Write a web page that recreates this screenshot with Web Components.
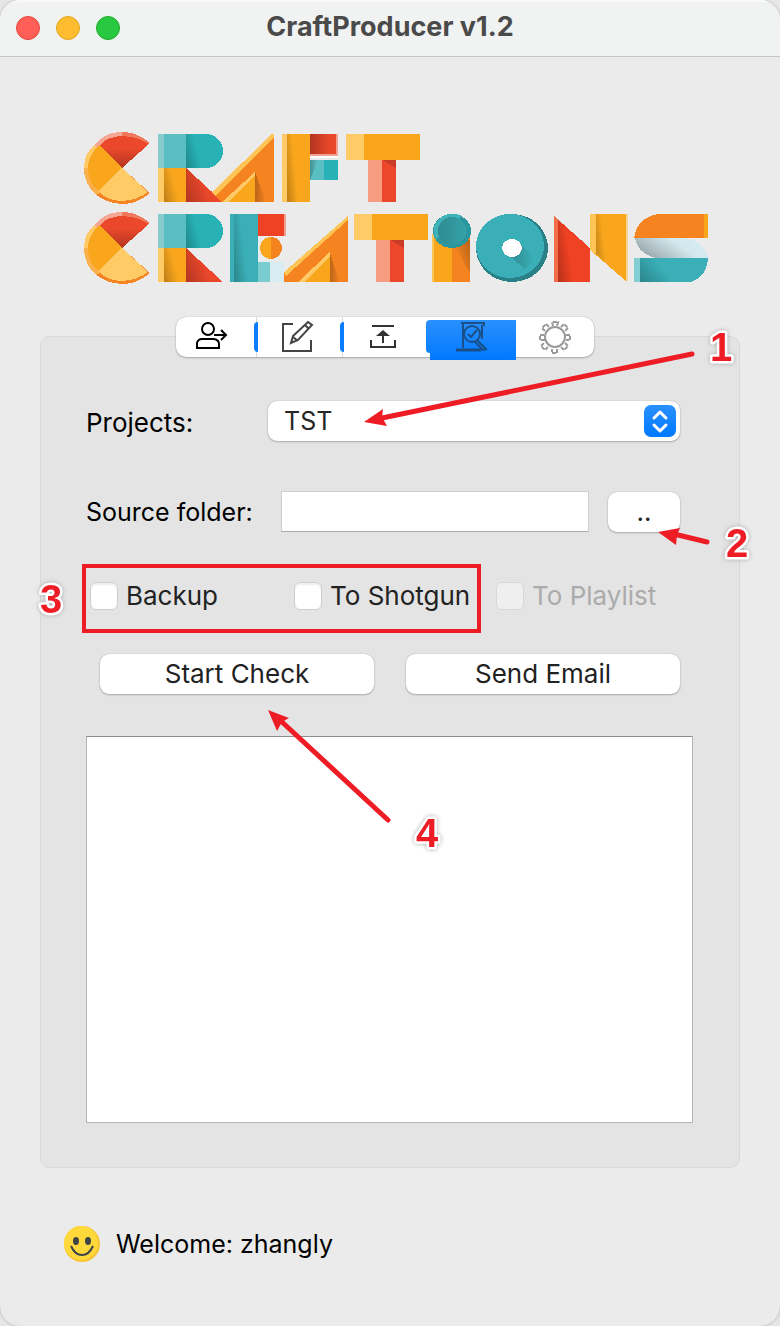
<!DOCTYPE html>
<html lang="en">
<head>
<meta charset="utf-8">
<title>CraftProducer v1.2</title>
<style>
html,body{margin:0;background:#e6e6e6}
body{font-family:Inter,"Liberation Sans",sans-serif;font-size:26px;color:#000}
</style>
</head>
<body>
<craft-window>
  <span slot="title">CraftProducer v1.2</span>
  <craft-logo></craft-logo>
  <craft-panel>
    <tool-tabs slot="tabs"></tool-tabs>
    <project-select></project-select>
    <source-folder></source-folder>
    <check-options></check-options>
    <action-bar></action-bar>
    <output-log></output-log>
  </craft-panel>
  <user-status>Welcome: zhangly</user-status>
  <step-marks slot="overlay"></step-marks>
</craft-window>
<script>
const define = (name, html) => {
  const t = document.createElement('template');
  t.innerHTML = html;
  customElements.define(name, class extends HTMLElement {
    constructor() {
      super();
      this.attachShadow({mode: 'open'}).appendChild(t.content.cloneNode(true));
    }
  });
};

define('craft-window', `
<style>
:host{display:block;position:relative;box-sizing:border-box;min-height:100vh;background:#ebebeb;border-radius:20px;box-shadow:0 0 2px #999;overflow:hidden}
header{display:grid;grid-template-columns:1fr auto 1fr;align-items:center;height:57px;box-sizing:border-box;padding:0 16px;background:#f1f3f2;border-bottom:1px solid #c6c6c6;box-shadow:inset 0 2px #fafafa}
.lights{display:flex;gap:16px}
.lights button{width:24px;height:24px;padding:0;border:1px solid #e2463f;border-radius:50%;background:#ff5f57}
.lights .min{background:#febc2e;border-color:#e1a325}
.lights .max{background:#28c840;border-color:#1dac2b}
h1{margin:0;padding-bottom:2px;font-size:27px;line-height:32px;font-weight:700;color:#4a4a4a}
main{padding:75px 40px 64px}
</style>
<header><div class="lights"><button aria-label="Close"></button><button class="min" aria-label="Minimize"></button><button class="max" aria-label="Zoom"></button></div><h1><slot name="title"></slot></h1><span></span></header>
<main><slot></slot></main>
<slot name="overlay"></slot>`);

define('craft-logo', `
<style>
:host{display:block;padding-left:44px}
svg{display:block;width:626px;max-width:100%}
</style>
<svg viewBox="84 132 626 152" shape-rendering="crispEdges" role="img" aria-label="Craft Creations">
<defs>
<linearGradient id="sh" x1="0" y1="1" x2="1" y2=".6"><stop offset="0" stop-color="#000" stop-opacity=".24"/><stop offset=".6" stop-color="#000" stop-opacity="0"/></linearGradient>
<linearGradient id="lr"><stop offset="0" stop-color="#000" stop-opacity=".24"/><stop offset="1" stop-color="#000" stop-opacity="0"/></linearGradient>
<linearGradient id="dn" x1="0" y1="0" x2="0" y2="1"><stop offset=".4" stop-color="#000" stop-opacity="0"/><stop offset="1" stop-color="#000" stop-opacity=".24"/></linearGradient>
<linearGradient id="dr" x1="1" y1="0" x2=".2" y2=".5"><stop offset="0" stop-color="#000" stop-opacity=".25"/><stop offset="1" stop-color="#000" stop-opacity="0"/></linearGradient>
<linearGradient id="pl" x1="0" y1=".4" x2="1" y2="0"><stop offset="0" stop-color="#9fadb3"/><stop offset=".55" stop-color="#d4e9ed"/><stop offset="1" stop-color="#d7edf2"/></linearGradient>
<g id="c">
<path d="M122 168 94 146Q104 132 122 132Q138 132 150 143Z" fill="#f0785c"/><path d="M94 146Q104 132 122 132L122 136Q106 137 98 147Z" fill="#f5a694"/>
<path d="M122 168 94 145Q84 154 84 168Q85 182 92 191Z" fill="#fec966"/>
<path d="M84 172 88 172 122 168 150 193Q138 204 122 204Q90 202 84 172Z" fill="#f58424"/>
<path d="M84 168 88 168Q90 184 100 193L96 195Q84 184 84 168Z" fill="#fbb04e"/>
<path id="k" d="M122 168 100 145Q108 136 123 136Q138 137 149 144Z" fill="#ea472b"/><path d="M122 168 100 145Q108 136 123 136Q138 137 149 144Z" fill="url(#dn)"/>
<path d="M122 168 100 145Q88 154 88 168Q88 182 98 191Z" fill="#f9a61c"/>
<path d="M122 168 98 191Q108 201 122 201Q138 200 148 192Z" fill="#fecb66"/>
</g>
<g id="r">
<path d="M158 134h6v34h-6z" fill="#86cccd"/><path d="M164 134h22v34h-22z" fill="#5abfc2"/>
<path d="M186 134h20a17 17 0 0 1 0 34h-20z" fill="#28b2b5"/><path d="M186 134h24v34h-24z" fill="url(#sh)"/>
<path d="M158 168h6v34h-6z" fill="#fecb66"/><path d="M164 168h22v34h-22z" fill="#f9a61c"/><path d="M164 168h22v34h-22z" fill="url(#sh)"/>
<path d="M186 168 223 202H186z" fill="#ea472b"/><path d="M186 168 223 202H186z" fill="url(#sh)"/>
</g>
<g id="t">
<path d="M346 134h18v26h-18z" fill="#fecb66"/><path d="M364 134h56v26h-56z" fill="#f9a61c"/>
<path d="M368 160h14v42h-14z" fill="#f69c80"/><path d="M382 160h14v42h-14z" fill="#ea472b"/><path d="M382 160h14v8z" fill="#c83b24"/>
</g>
</defs>
<use href="#c"/><use href="#c" y="80"/><use href="#r"/><use href="#r" y="80"/><use href="#t"/><use href="#t" x="8" y="80"/>
<path d="M272 134h2v68H222L212 193Z" fill="#f58420"/><path d="M272 134h2v3L215 196 212 192Z" fill="#fec556"/>
<path d="M255 173v29H224Z" fill="#f9a61c"/><path d="M255 172v4L228 202h-6Z" fill="#fec966"/><path d="M255 172 266 202H255Z" fill="url(#lr)"/>
<path d="M282 134h5v68h-5z" fill="#fecb66"/><path d="M287 134h23v68h-23z" fill="#f9a61c"/><path d="M287 134h16v68h-16z" fill="url(#sh)"/>
<path d="M310 134h26v20h-26z" fill="#ea472b"/><path d="M310 134h20v20h-20z" fill="url(#lr)"/><path d="M336 134h2v22h-28v-2h26z" fill="#f0a194"/>
<path d="M310 160h14v20h-14z" fill="#5abfc2"/><path d="M324 160h14v20h-14z" fill="#28b2b5"/><path d="M310 160h8L310 180z" fill="url(#lr)"/><path d="M310 156h28v2h-28z" fill="#fff"/>
<path d="M230 214h28v68h-28z" fill="#3aafb7"/><path d="M234 214h20v68h-20z" fill="url(#sh)"/>
<path d="M258 214h26v22h-26z" fill="#ef4123"/><path d="M284 214h2v22h-2z" fill="#f2a092"/>
<circle cx="271" cy="248" r="11" fill="#f9a61c"/><path d="M271 237a11 11 0 0 1 0 22z" fill="#f58420"/>
<path d="M258 262h12v20h-12z" fill="#7accd0"/><path d="M270 262h14v20h-14z" fill="#d7edf2"/>
<path d="M348 216v66h-64v-10Z" fill="#f58420"/><path d="M348 216v4L286 276 284 272Z" fill="#fec556"/>
<path d="M330 253v29H300Z" fill="#f9a61c"/><path d="M330 252v4L304 282h-6Z" fill="#fec966"/><path d="M330 254 340 282H330Z" fill="url(#lr)"/>
<path d="M432 234h2v48h-2z" fill="#fec556"/><path d="M434 234h18v48h-18z" fill="#f9a61c"/><path d="M452 234h18v48h-18z" fill="#f58420"/><path d="M452 240h18v34z" fill="url(#dr)"/>
<ellipse cx="452" cy="231" rx="19" ry="17" fill="#2b969d"/><path d="M436 239a19 17 0 0 1 26-23z" fill="#3fb3ba"/><circle cx="452" cy="231" r="14" fill="#36a2a9"/><circle cx="452" cy="231" r="14" fill="url(#lr)" opacity=".6"/>
<ellipse cx="512" cy="248" rx="36" ry="34" fill="#298087"/><ellipse cx="510" cy="246" rx="34" ry="32" fill="#3aafb7"/>
<path d="M519 243 535 259 525 269 506 253Z" fill="url(#lr)"/><ellipse cx="512" cy="248" rx="10" ry="9" fill="#fff"/>
<path d="M554 216 590 248v34h-36z" fill="#ef4123"/><path d="M554 216 558 219v63h-4z" fill="#f36f4a"/><path d="M558 219 580 240V282H558z" fill="url(#sh)"/>
<path d="M590 214h36v67L590 250z" fill="#f9a61c"/><path d="M590 214h6v40l-6-4z" fill="#fec556"/><path d="M596 214h16v54L596 254z" fill="url(#sh)"/><path d="M626 214h2v67h-2z" fill="#f9d596"/>
<path d="M658 214h50v24h-74q3-20 24-24z" fill="#f58420"/><path d="M704 214h4v24h-4z" fill="#f9a61c"/>
<path d="M635 238h50q19 3 23 20h-52q-18-4-21-20z" fill="url(#pl)"/>
<path d="M634 258h74q-1 18-17 24h-57z" fill="#3aafb7"/><path d="M640 258h50v24h-50z" fill="url(#sh)"/><path d="M634 258h6v24h-6z" fill="#83ced2"/>
</svg>`);

define('craft-panel', `
<style>
:host{display:block;padding-top:52px}
section{position:relative;box-sizing:border-box;border:1px solid #d9d9d9;border-radius:10px;background:#e4e4e4;padding:64px 46px 44px 45px}
.tabs{position:absolute;left:0;right:10px;top:-20px;display:flex;justify-content:center}
</style>
<section><div class="tabs"><slot name="tabs"></slot></div><slot></slot></section>`);

define('tool-tabs', `
<style>
:host{display:block}
nav{display:flex;height:40px;border-radius:10px;background:#fff;box-shadow:0 0 1px #999,0 1px 2px #aaa}
button{position:relative;width:86px;height:40px;margin:0;padding:0;border:0;background:none;display:flex;align-items:center;justify-content:center;color:#222}
button:first-child{width:80px;padding-right:8px;color:#000}
button:last-child{width:78px;color:#999}
svg{width:36px;height:34px;fill:none;stroke:currentColor;stroke-width:2}
.mid{padding-right:5px;border-left:1px solid #d8d8d8}
.mid::before{content:"";position:absolute;left:-3px;top:5px;width:4px;height:30px;border-radius:4px 0 0 4px;background:#0a7dff}
.on{width:88px;padding:0 0 6px;top:3px;background:linear-gradient(#2a90ff,#0079ff);background-size:86px 40px;background-position:2px 0;background-repeat:no-repeat;color:#194f86}
.on::before{content:"";position:absolute;left:-2px;top:0;width:4px;height:33px;border-radius:4px 0 0 4px;background:linear-gradient(#2a90ff,#0a80ff)}
</style>
<nav>
<button aria-label="Account"><svg viewBox="0 0 36 34"><circle cx="14" cy="9" r="6"/><path d="M3 28v-5q1-4 5-4h12q5 1 5 5v4zM20 15h12M27 10l5 5-5 5"/></svg></button>
<button class="mid" aria-label="Edit"><svg viewBox="0 0 36 34"><path d="M14 4H4v27h28V20" stroke="#444"/><path d="m12 23 2-7L29 2l4 3L19 20zM14 17l5 4M26 5l4 4" stroke="#444"/></svg></button>
<button class="mid" aria-label="Upload"><svg viewBox="0 0 36 34"><path d="M7 6h22M6 20v7h24v-7M18 12v11" stroke="#333"/><path d="m11 16 7-6 7 6z" fill="#333" stroke="none"/></svg></button>
<button class="on" aria-label="Check"><svg viewBox="0 0 36 34"><path d="M7 3h23v3M9 3v25M28 5v14"/><path d="M2 30h25" stroke-width="3"/><circle cx="18" cy="14" r="8"/><path d="m14 14 3 3 6-7M23 20l9 9-3 1-8-8"/></svg></button>
<button aria-label="Settings"><svg viewBox="0 0 36 34"><circle cx="18" cy="17" r="10"/><path d="M16 6l-1-4h6l-1 4m4 1 3-3 4 4-3 3m1 4h4v5h-4m-1 3 3 3-4 4-3-3m-4 2v4h-5v-4m-4-2-3 3-4-4 3-3M8 20H3v-5h5m0-4L5 8l4-4 3 3" stroke-width="2" stroke-dasharray="4 1"/></svg></button>
</nav>`);

define('project-select', `
<style>
:host{display:block;margin-right:13px}
.row{display:grid;grid-template-columns:182px 1fr;align-items:center}
label{padding-top:3px}
.box{position:relative}
select{appearance:none;display:block;width:100%;height:40px;padding:0 44px 0 16px;border:0;border-radius:9px;background:#fff;box-shadow:0 0 1px #999,0 1px 2px #aaa;font:inherit;font-size:25px;color:#262626}
svg{position:absolute;right:4px;top:4px;pointer-events:none}
</style>
<div class="row"><label for="p">Projects:</label><div class="box"><select id="p"><option>TST</option></select>
<svg width="32" height="32"><defs><linearGradient id="b" x2="0" y2="1"><stop stop-color="#2a90ff"/><stop offset="1" stop-color="#0079ff"/></linearGradient></defs><rect width="32" height="32" rx="7" fill="url(#b)"/><path d="m10 13 6-6 6 6M10 20l6 6 6-6" fill="none" stroke="#fff" stroke-width="3" stroke-linecap="round" stroke-linejoin="round"/></svg></div></div>`);

define('source-folder', `
<style>
:host{display:block;margin:50px 13px 0 0}
.row{display:grid;grid-template-columns:195px 1fr 72px;align-items:center}
label{font-size:25px}
input{box-sizing:border-box;width:auto;min-width:0;height:41px;margin-right:19px;padding:0 8px;border:1px solid #cfcfcf;border-bottom-color:#a9a9a9;background:#fff;font:inherit}
button{height:40px;padding:0;border:0;border-radius:9px;background:#fff;box-shadow:0 0 1px #999,0 1px 2px #aaa;font:inherit;color:#222}
</style>
<div class="row"><label for="s">Source folder:</label><input id="s" type="text"><button aria-label="Browse">..</button></div>`);

define('check-options', `
<style>
:host{display:block;margin:47px 0 0 4px}
.row{display:grid;grid-template-columns:204px 202px 1fr;align-items:center}
label{display:flex;align-items:center;gap:8px;line-height:34px;white-space:nowrap;color:#222}
.off{color:#ababab}
input{appearance:none;flex:none;box-sizing:border-box;width:28px;height:28px;margin:0;border:1px solid #cecece;border-radius:6px;background:#fff;box-shadow:inset 0 2px 2px #eee}
input:disabled{background:#efefef;border-color:#d8d8d8}
</style>
<div class="row"><label><input type="checkbox">Backup</label><label><input type="checkbox">To Shotgun</label><label class="off"><input type="checkbox" disabled>To Playlist</label></div>`);

define('action-bar', `
<style>
:host{display:block;margin:41px 13px 0 14px}
.row{display:grid;grid-template-columns:1fr 1fr;gap:32px}
button{height:40px;padding:0 0 2px;border:0;border-radius:9px;background:#fff;box-shadow:0 0 1px #999,0 1px 2px #aaa;font:inherit;color:#222}
</style>
<div class="row"><button>Start Check</button><button>Send Email</button></div>`);

define('output-log', `
<style>
:host{display:block;margin-top:42px}
textarea{display:block;box-sizing:border-box;width:100%;height:387px;border:1px solid #b4b4b4;border-top-color:#8d8d8d;background:#fff;resize:none;font:inherit;padding:8px}
</style>
<textarea aria-label="Output"></textarea>`);

define('user-status', `
<style>
:host{display:flex;align-items:center;gap:16px;margin:58px 0 0 24px;font-size:25px;line-height:36px}
</style>
<svg width="36" height="36" aria-hidden="true"><circle cx="18" cy="18" r="18" fill="#f7c534"/><circle cx="17" cy="17" r="17" fill="#ffd93b"/><ellipse cx="12" cy="15" rx="3" ry="4" fill="#3e4347"/><ellipse cx="24" cy="15" rx="3" ry="4" fill="#3e4347"/><path d="M7 20q4 9 11 9t11-9" fill="none" stroke="#3e4347" stroke-width="2"/></svg>
<span><slot></slot></span>`);

define('step-marks', `
<style>
:host{position:absolute;left:0;top:0;pointer-events:none}
svg{display:block}
text{font:bold 40px "Liberation Sans",Arial,sans-serif;fill:#ee1c25;stroke:#fff;stroke-width:5px;stroke-linejoin:round;paint-order:stroke;filter:drop-shadow(0 0 2px #aaa)}
.l{stroke:#ee1c25;stroke-width:5;stroke-linecap:round}
.h{fill:#ee1c25}
</style>
<svg width="780" height="900" viewBox="0 0 780 900">
<path class="l" d="M692 354 382 418M707 542 674 534M388 820 282 722"/>
<path class="h" d="M364 422 383 409 382 417 387 426ZM658 532 680 528 677 535 676 545ZM268 710 289 718 282 722 277 731Z"/>
<rect x="84" y="566" width="395" height="65" fill="none" stroke="#ee1c25" stroke-width="4"/>
<text x="710" y="361">1</text><text x="726" y="557">2</text><text x="40" y="613">3</text><text x="416" y="847">4</text>
</svg>`);
</script>
</body>
</html>
